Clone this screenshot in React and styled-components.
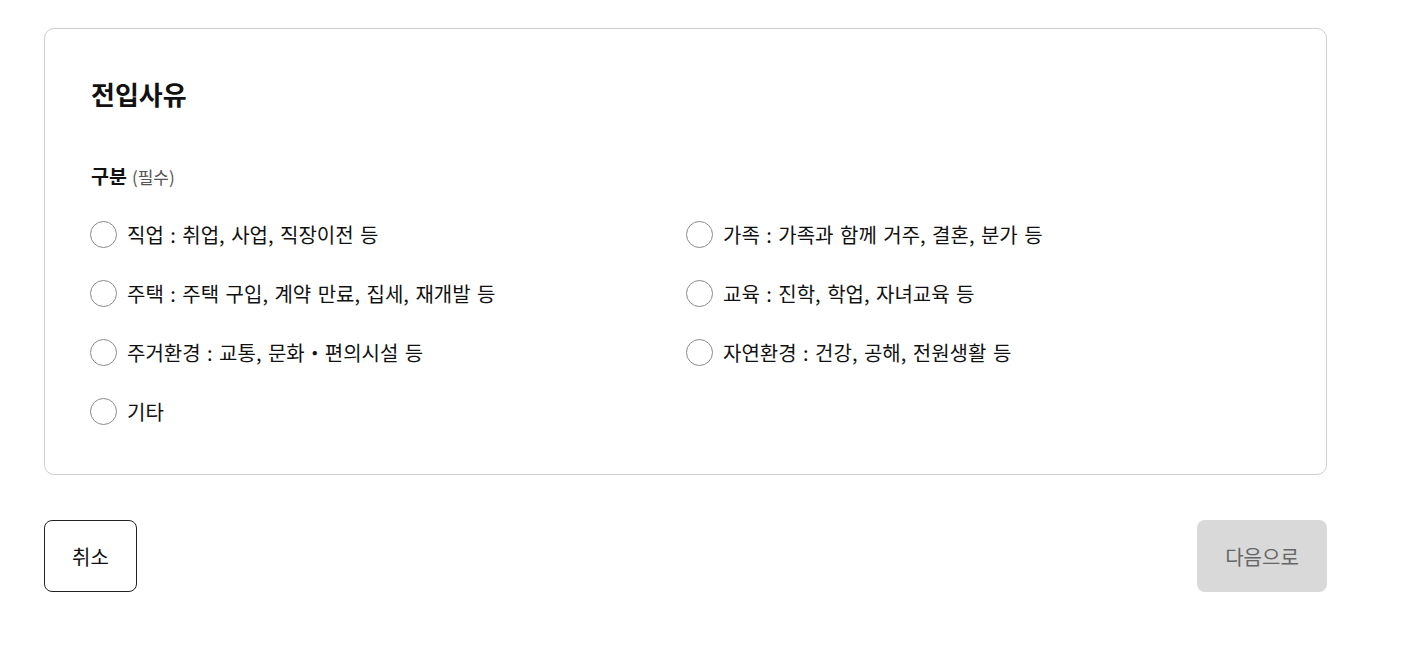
import React from "react";
import styled, { createGlobalStyle } from "styled-components";

const Global = createGlobalStyle`
  html, body { margin: 0; padding: 0; background: #fff; }
  body { font-family: "Noto Sans CJK KR", "Noto Sans", sans-serif; color: #111; }
  * { box-sizing: border-box; }
`;

const Page = styled.div`
  padding: 28px 0 0 44px;
  width: 1327px;
`;

const Card = styled.section`
  border: 1px solid #cfcfcf;
  border-radius: 10px;
  padding: 47px 46px 49px 46px;
`;

const Title = styled.h2`
  margin: 0;
  font-size: 26px;
  line-height: 36px;
  font-weight: 700;
  color: #111;
`;

const FieldLabel = styled.div`
  margin-top: 50px;
  font-size: 19.5px;
  line-height: 27px;
  font-weight: 700;
  color: #111;
`;

const Required = styled.span`
  font-size: 17px;
  font-weight: 400;
  color: #555;
  margin-left: 5px;
`;

const Options = styled.div`
  margin-top: 31px;
  margin-left: -1px;
  display: grid;
  grid-template-columns: 596px 1fr;
  row-gap: 32px;
`;

const Option = styled.label`
  display: flex;
  align-items: center;
  gap: 10px;
  height: 27px;
  font-size: 20px;
  word-spacing: 2px;
  color: #111;
  cursor: pointer;
`;

const Circle = styled.span`
  width: 27px;
  height: 27px;
  border-radius: 50%;
  border: 1.5px solid #8a8a8a;
  background: #fff;
  flex: none;
`;

const Actions = styled.div`
  margin-top: 45px;
  display: flex;
  justify-content: space-between;
`;

const CancelButton = styled.button`
  width: 93px;
  height: 72px;
  border: 1px solid #222;
  border-radius: 8px;
  background: #fff;
  font-family: inherit;
  font-size: 20px;
  color: #111;
`;

const NextButton = styled.button`
  width: 130px;
  height: 72px;
  border: none;
  border-radius: 8px;
  background: #d9d9d9;
  font-family: inherit;
  font-size: 20px;
  color: #666;
`;

const options = [
  "직업 : 취업, 사업, 직장이전 등",
  "가족 : 가족과 함께 거주, 결혼, 분가 등",
  "주택 : 주택 구입, 계약 만료, 집세, 재개발 등",
  "교육 : 진학, 학업, 자녀교육 등",
  "주거환경 : 교통, 문화・편의시설 등",
  "자연환경 : 건강, 공해, 전원생활 등",
  "기타",
];

export default function App() {
  return (
    <>
      <Global />
      <Page>
        <Card>
          <Title>전입사유</Title>
          <FieldLabel>
            구분<Required>(필수)</Required>
          </FieldLabel>
          <Options>
            {options.map((o) => (
              <Option key={o}>
                <Circle />
                {o}
              </Option>
            ))}
          </Options>
        </Card>
        <Actions>
          <CancelButton>취소</CancelButton>
          <NextButton>다음으로</NextButton>
        </Actions>
      </Page>
    </>
  );
}
